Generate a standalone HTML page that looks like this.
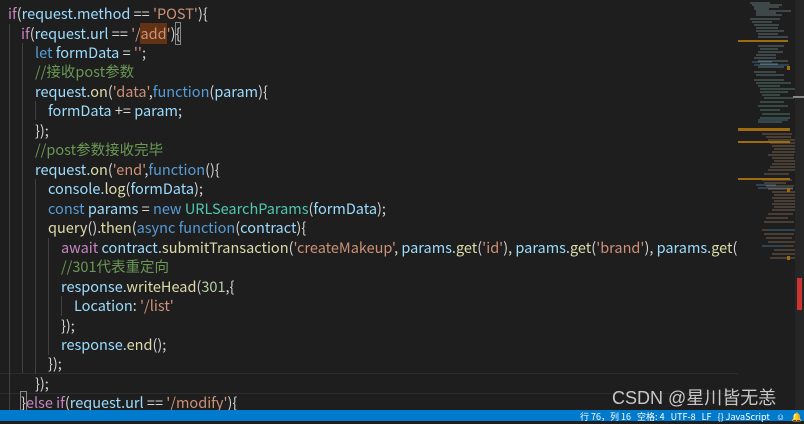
<!DOCTYPE html><html><head><meta charset="utf-8"><style>
body{margin:0;width:804px;height:421px;background:#1e1e1e;overflow:hidden;position:relative;font-family:"Noto Sans CJK SC","Liberation Sans",sans-serif;font-size:14.5px;color:#9cdcfe}
.l{position:absolute;left:0;height:19.45px;line-height:19.45px;white-space:pre;}
.k{color:#c586c0}.b{color:#569cd6}.s{color:#ce9178}.f{color:#dcdcaa}.c{color:#6a9955}.p{color:#d4d4d4}.t{color:#4ec9b0}.y{color:#ffd700}
.g{position:absolute;width:1px;background:#404040}
#code{position:absolute;left:0;top:0;width:738px;height:410px;overflow:hidden}
</style></head><body>
<div id="code">
<div style="position:absolute;left:0;top:373px;width:738px;height:19px;border-top:1px solid #2c2c2c;border-bottom:1px solid #2c2c2c"></div>
<div class="g" style="left:9px;top:24px;height:388px"></div>
<div class="g" style="left:22px;top:43px;height:330px"></div>
<div class="g" style="left:35px;top:101px;height:19px"></div>
<div class="g" style="left:35px;top:179px;height:195px"></div>
<div class="g" style="left:48px;top:238px;height:117px"></div>
<div class="g" style="left:61px;top:296px;height:20px"></div>
<div class="l" style="top:4px;left:8px"><span class="k">if</span><span class="p">(</span>request.method <span class="p">==</span> <span class="s">'POST'</span><span class="p">){</span></div>
<div class="l" style="top:24px;left:21px"><span class="k">if</span><span class="p">(</span>request.url <span class="p">==</span> <span class="s">'/<span style="background:#613214">add</span>'</span><span class="p">)<span style="outline:1px solid #888">{</span></span></div>
<div class="l" style="top:43px;left:35px"><span class="b">let</span> formData <span class="p">=</span> <span class="s">''</span><span class="p">;</span></div>
<div class="l" style="top:62px;left:35px"><span class="c">//接收post参数</span></div>
<div class="l" style="top:82px;left:35px">request.<span class="f">on</span><span class="p">(</span><span class="s">'data'</span><span class="p">,</span><span class="b">function</span><span class="p">(</span>param<span class="p">){</span></div>
<div class="l" style="top:101px;left:48px">formData <span class="p">+=</span> param<span class="p">;</span></div>
<div class="l" style="top:121px;left:35px"><span class="p">});</span></div>
<div class="l" style="top:140px;left:35px"><span class="c">//post参数接收完毕</span></div>
<div class="l" style="top:160px;left:35px">request.<span class="f">on</span><span class="p">(</span><span class="s">'end'</span><span class="p">,</span><span class="b">function</span><span class="p">(){</span></div>
<div class="l" style="top:179px;left:48px">console.<span class="f">log</span><span class="p">(</span>formData<span class="p">);</span></div>
<div class="l" style="top:199px;left:48px"><span class="b">const</span> params <span class="p">=</span> <span class="b">new</span> <span class="t">URLSearchParams</span><span class="p">(</span>formData<span class="p">);</span></div>
<div class="l" style="top:218px;left:48px"><span class="f">query</span><span class="p">().</span><span class="f">then</span><span class="p">(</span><span class="b">async function</span><span class="p">(</span>contract<span class="p">){</span></div>
<div class="l" style="top:238px;left:61px"><span class="k">await</span> contract.<span class="f">submitTransaction</span><span class="p">(</span><span class="s">'createMakeup'</span><span class="p">,</span> params.<span class="f">get</span><span class="p">(</span><span class="s">'id'</span><span class="p">),</span> params.<span class="f">get</span><span class="p">(</span><span class="s">'brand'</span><span class="p">),</span> params.<span class="f">get</span><span class="p">(</span><span class="s">'name'</span><span class="p">)</span></div>
<div class="l" style="top:257px;left:61px"><span class="c">//301代表重定向</span></div>
<div class="l" style="top:277px;left:61px">response.<span class="f">writeHead</span><span class="p">(</span><span style="color:#b5cea8">301</span><span class="p">,{</span></div>
<div class="l" style="top:296px;left:74px">Location<span class="p">:</span> <span class="s">'/list'</span></div>
<div class="l" style="top:316px;left:61px"><span class="p">});</span></div>
<div class="l" style="top:335px;left:61px">response.<span class="f">end</span><span class="p">();</span></div>
<div class="l" style="top:354px;left:48px"><span class="p">});</span></div>
<div class="l" style="top:374px;left:35px"><span class="p">});</span></div>
<div class="l" style="top:393px;left:21px"><span class="p" style="outline:1px solid #888">}</span><span class="k">else if</span><span class="p">(</span>request.url <span class="p">==</span> <span class="s">'/modify'</span><span class="p">){</span></div>
</div>
<div style="position:absolute;left:738px;top:0;width:57px;height:410px;background:#1e1e1e">
<svg width="57" height="410" style="position:absolute;left:0;top:0">
<g stroke-width="1" opacity="0.6">
<path d="M12 3h20M14 5h30M16 7h25M16 9h15M18 11h35M18 13h20M18 15h26M12 19h30M14 22h20M16 25h25M18 28h22M18 31h28M20 34h20M20 37h30M20 46h26M22 49h18M20 52h25M18 55h20M16 58h22M20 61h30M22 64h18M20 67h26M16 72h22M18 75h28" stroke="#8aa"/>
<path d="M16 80h30M18 83h35M20 86h22M22 89h40M22 92h28M24 95h18M26 98h30M22 102h24M20 106h30M22 110h20M24 114h28M22 118h30M20 122h24" stroke="#7a9"/>
<path d="M24 134h30M28 137h25M30 140h34M32 143h28M34 146h30M36 149h25M34 152h32M30 155h26M34 158h22M36 161h30M34 164h40M32 167h28M30 170h35M26 174h25M24 180h30M26 183h22M28 186h28M30 189h25M34 192h30M36 195h22M34 198h28M36 201h30M34 204h26M36 207h30M34 210h28M30 214h25M28 218h22M26 222h30M24 230h28M26 234h30M28 238h26M30 242h30M34 246h22M36 250h28M34 254h30M32 258h26" stroke="#a86"/>
<path d="M14 62h20M16 65h35M20 120h30M18 185h20M20 188h35M30 230h30M24 246h20" stroke="#59c"/>
</g>
<rect x="0" y="40" width="50" height="2" fill="#a06a10"/>
<rect x="0" y="128" width="52" height="3" fill="#a06a10"/>
<rect x="0" y="141" width="52" height="2" fill="#a06a10"/>
<rect x="0" y="178" width="52" height="2" fill="#a06a10"/>
<rect x="49" y="66" width="3" height="4" fill="#a06a10"/>
<rect x="49" y="188" width="3" height="4" fill="#a06a10"/>
<rect x="49" y="256" width="3" height="4" fill="#a06a10"/>
</svg></div>
<div style="position:absolute;left:795px;top:0;width:9px;height:410px;background:#252526"></div>
<div style="position:absolute;left:797px;top:278px;width:5px;height:32px;background:#c33"></div>
<div style="position:absolute;left:793px;top:96px;width:11px;height:2px;background:#888"></div>
<div style="position:absolute;left:612px;top:387px;font-family:'Liberation Sans','Noto Sans CJK SC',sans-serif;font-size:18px;color:#c8c8c8;line-height:22px">CSDN @星川皆无恙</div>
<div style="position:absolute;left:0;top:410px;width:804px;height:11px;background:#007acc;color:#fff;font-size:9px;line-height:14px;white-space:pre"><span style="position:absolute;left:580px;top:0">行 76，列 16   空格: 4   UTF-8   LF   {} JavaScript   ☺   🔔</span></div>
</body></html>
